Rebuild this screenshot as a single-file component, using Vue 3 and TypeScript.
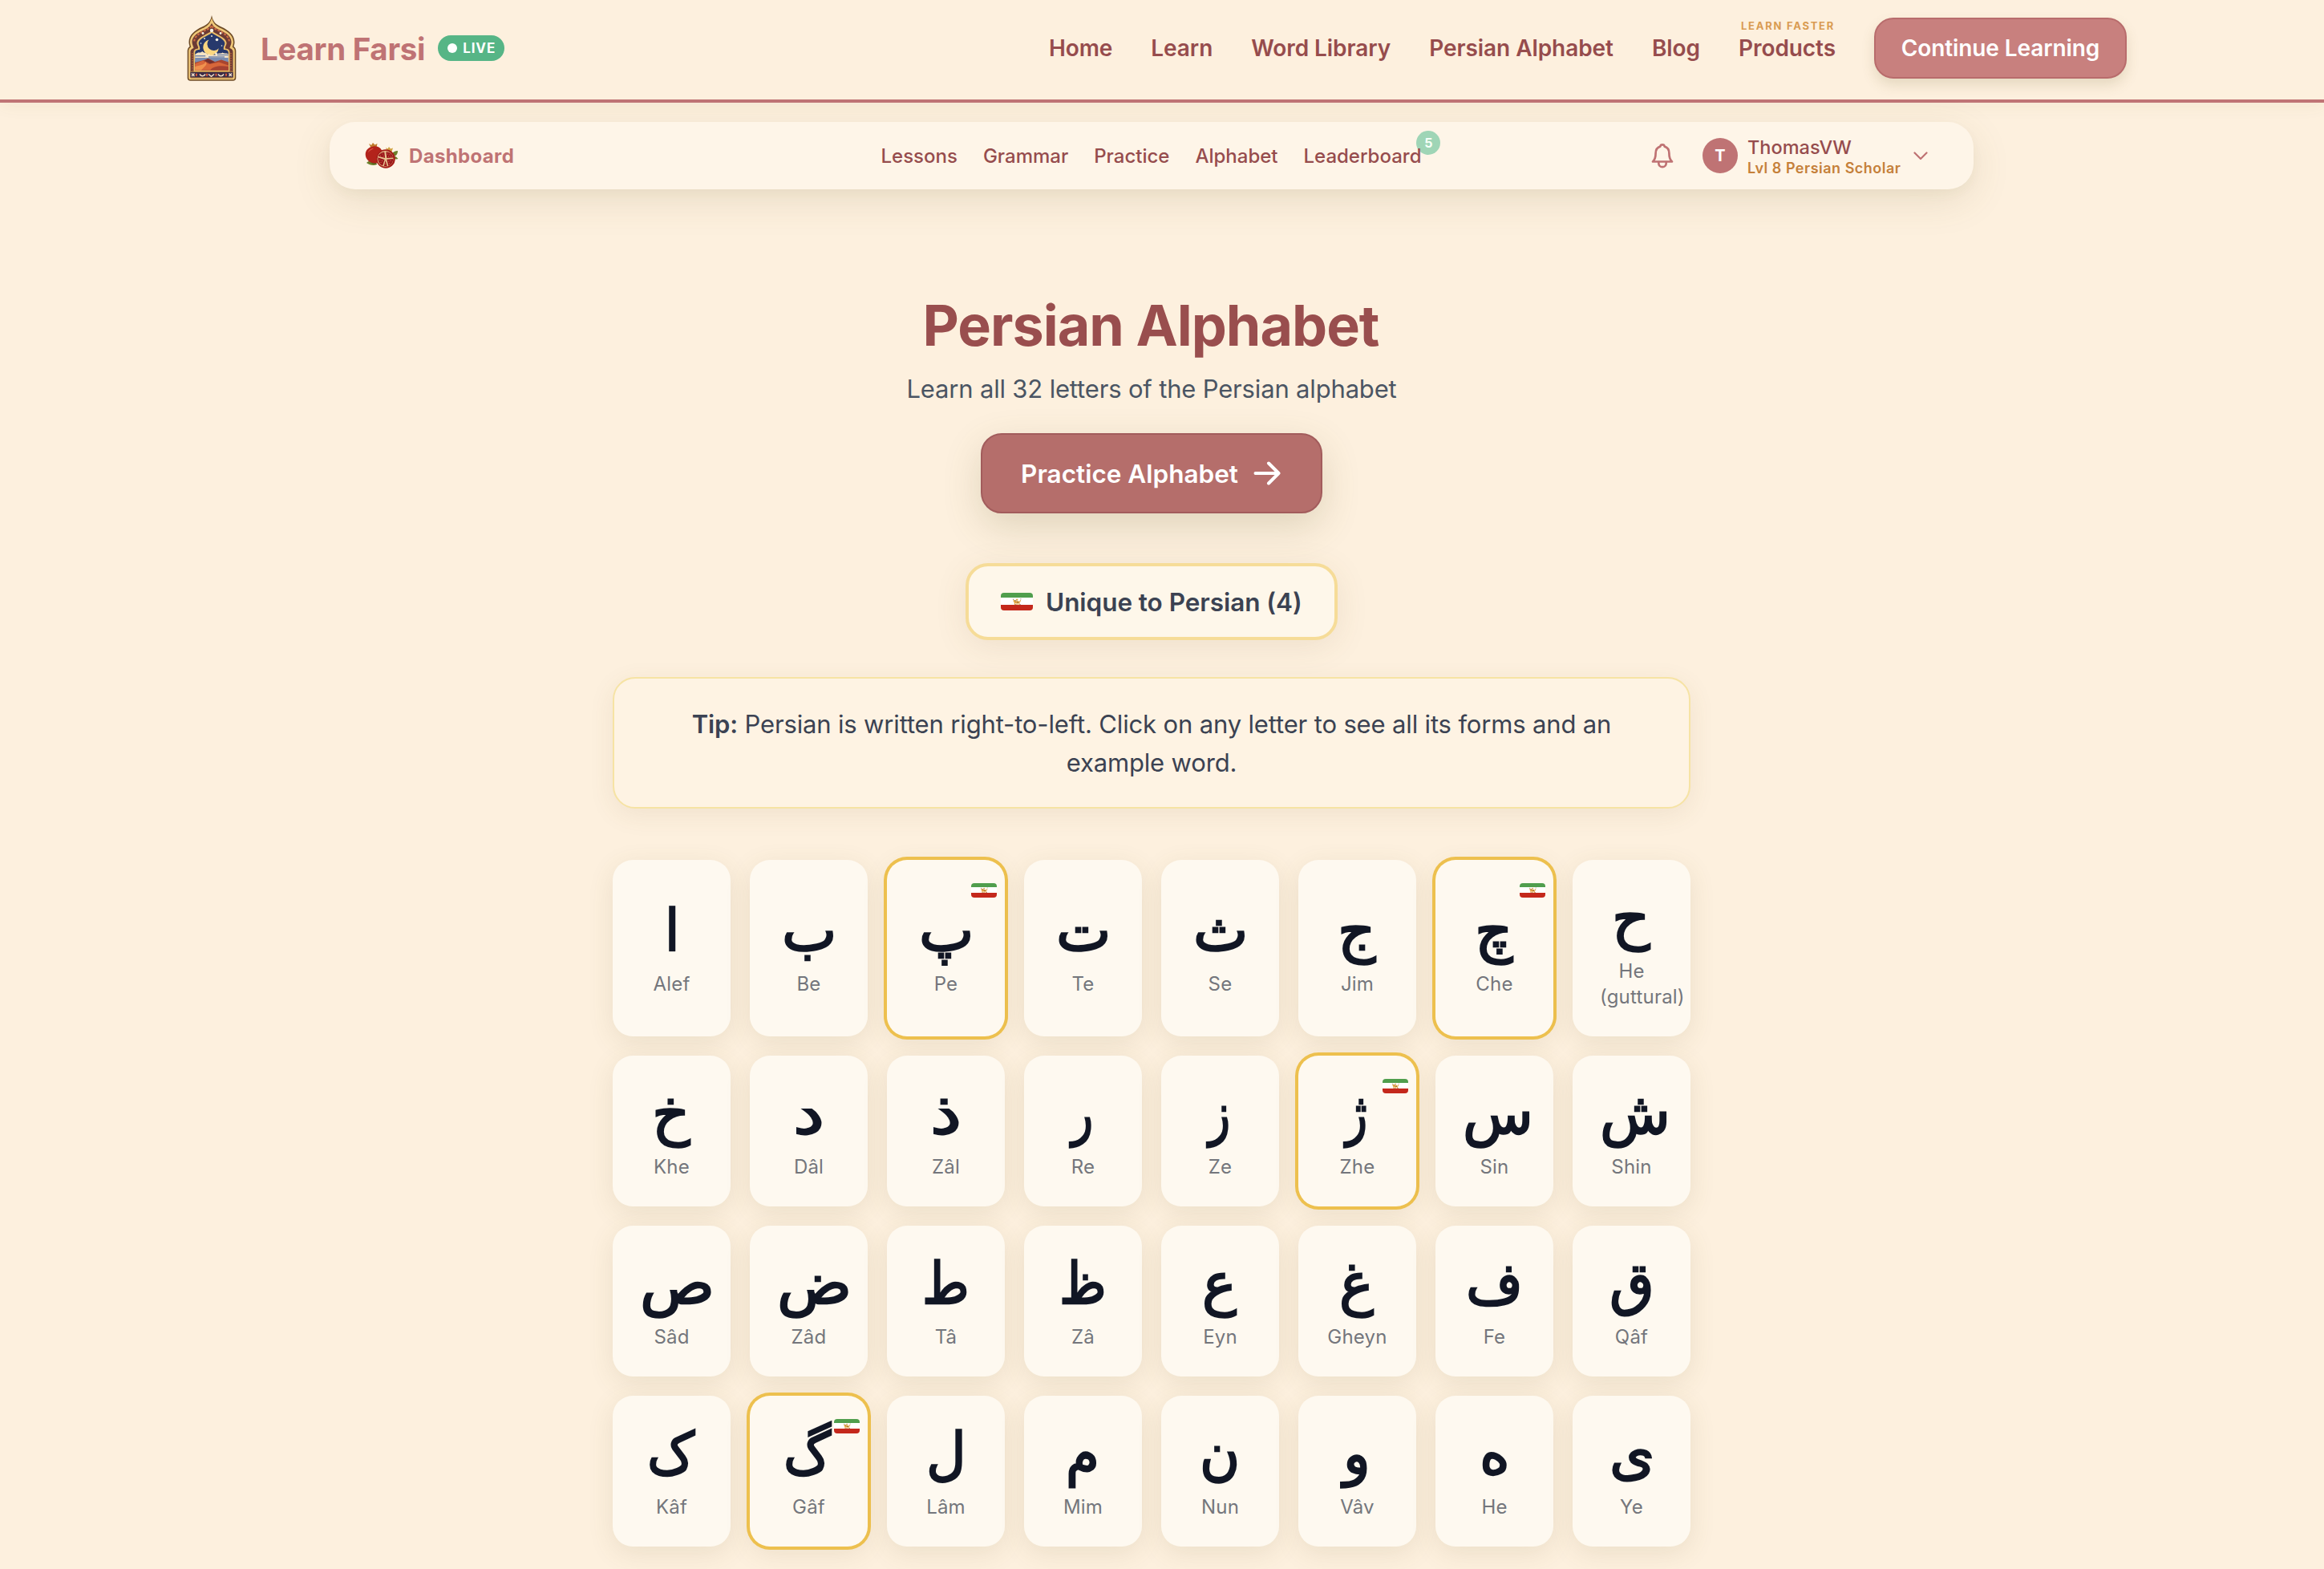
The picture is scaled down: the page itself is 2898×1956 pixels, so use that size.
<script setup lang="ts">
interface Letter {
  ch: string
  name: string
  /** horizontal scale of the glyph */
  sx: number
  /** horizontal nudge of the glyph, px */
  dx?: number
  unique?: boolean
}

const mainLinks: string[] = ['Home', 'Learn', 'Word Library', 'Persian Alphabet', 'Blog']
const subLinks: string[] = ['Lessons', 'Grammar', 'Practice', 'Alphabet', 'Leaderboard']

const letters: Letter[] = [
  { ch: 'ا', name: 'Alef', sx: 0.92 },
  { ch: 'ب', name: 'Be', sx: 1.01 },
  { ch: 'پ', name: 'Pe', sx: 1.01, unique: true },
  { ch: 'ت', name: 'Te', sx: 1.01 },
  { ch: 'ث', name: 'Se', sx: 1.01 },
  { ch: 'ج', name: 'Jim', sx: 1.02, dx: -2 },
  { ch: 'چ', name: 'Che', sx: 1.02, dx: -2, unique: true },
  { ch: 'ح', name: 'He (guttural)', sx: 1.02, dx: -2 },
  { ch: 'خ', name: 'Khe', sx: 1.02, dx: -2 },
  { ch: 'د', name: 'Dâl', sx: 1.22 },
  { ch: 'ذ', name: 'Zâl', sx: 1.22 },
  { ch: 'ر', name: 'Re', sx: 0.78, dx: -1 },
  { ch: 'ز', name: 'Ze', sx: 0.78, dx: -1 },
  { ch: 'ژ', name: 'Zhe', sx: 0.78, dx: -1, unique: true },
  { ch: 'س', name: 'Sin', sx: 1 },
  { ch: 'ش', name: 'Shin', sx: 1 },
  { ch: 'ص', name: 'Sâd', sx: 1.07, dx: 3 },
  { ch: 'ض', name: 'Zâd', sx: 1.07, dx: 3 },
  { ch: 'ط', name: 'Tâ', sx: 0.88 },
  { ch: 'ظ', name: 'Zâ', sx: 0.88 },
  { ch: 'ع', name: 'Eyn', sx: 1, dx: -1 },
  { ch: 'غ', name: 'Gheyn', sx: 1, dx: -1 },
  { ch: 'ف', name: 'Fe', sx: 0.95 },
  { ch: 'ق', name: 'Qâf', sx: 1 },
  { ch: 'ک', name: 'Kâf', sx: 0.92, dx: -2 },
  { ch: 'گ', name: 'Gâf', sx: 0.92, dx: -3, unique: true },
  { ch: 'ل', name: 'Lâm', sx: 0.95 },
  { ch: 'م', name: 'Mim', sx: 0.94 },
  { ch: 'ن', name: 'Nun', sx: 0.95 },
  { ch: 'و', name: 'Vâv', sx: 0.97, dx: -1 },
  { ch: 'ه', name: 'He', sx: 1 },
  { ch: 'ی', name: 'Ye', sx: 1 },
]
</script>

<template>
  <div class="page">
    <svg width="0" height="0" class="defs" aria-hidden="true">
      <symbol id="sun" viewBox="0 0 12 10">
        <g fill="#e2a444">
          <rect x="1.6" y="3.6" width="7" height="3.2" rx="1.2" />
          <rect x="0.6" y="2" width="2.6" height="3" rx="1" />
          <rect x="2" y="6" width="1.4" height="3" />
          <rect x="5" y="6" width="1.4" height="3" />
          <rect x="7.8" y="5.4" width="1.4" height="3.6" />
          <path d="M8.6 4.6 10.6 2l.6.6L9.6 6z" />
          <circle cx="5.6" cy="1.8" r="1.3" />
        </g>
        <path d="M0 1.4h1M10.4.8h1M3 3.2h1.6M6 5.4h1.8M3.6 8.6h.9M9.6 8.4h.9" stroke="#4c3a20" stroke-width=".9" />
      </symbol>
    </svg>

    <header class="header">
      <div class="header-inner">
        <div class="brand">
          <svg class="logo" viewBox="0 0 62 84">
            <path d="M31 1c1.500 8 5 11.500 12 14.500 9 4 16.500 10 16.500 19 0 3-1 4.500-1 5.500 2.300 1.500 2.800 3.500 2.800 6v33c0 2.500-1.300 3.800-3.800 3.800H4.500C2 82.800.7 81.500.7 79V46c0-2.500.5-4.500 2.800-6 0-1-1-2.500-1-5.500 0-9 7.500-15 16.500-19C26 12.500 29.500 9 31 1z" fill="#6d4a26" />
            <path d="M31 4c1.700 7.500 5.500 10.500 11.500 13.200C51 21 58 26.500 58 34.500c0 3-1 4.500-1.200 6.300 2.200 1 3 2.700 3 5.200v32.500c0 2-.9 2.800-2.800 2.800H5c-1.900 0-2.800-.8-2.800-2.800V46c0-2.500.8-4.200 3-5.200C5 39 4 37.500 4 34.500 4 26.500 11 21 19.500 17.200 25.500 14.500 29.300 11.500 31 4z" fill="#f0c878" />
            <path d="M31 11c2 4.500 5.500 6.500 10.500 8.800C50 23.500 55.500 28 55.500 34.500c0 3.500-2 5.500-2 7.500 2.500.8 4 2.200 4 4.500v31.800c0 .7-.3 1-1 1h-51c-.7 0-1-.3-1-1V46.500c0-2.300 1.500-3.700 4-4.500 0-2-2-4-2-7.500 0-6.500 5.500-11 14-14.700C25.500 17.500 29 15.500 31 11z" fill="#6b3a35" />
            <path d="M31 14.500c3.500 5 22 8 22 20.500" fill="none" stroke="#c96a42" stroke-width="2.200" stroke-dasharray="3 1.500" />
            <path d="M31 14.500c-3.500 5-22 8-22 20.500" fill="none" stroke="#c96a42" stroke-width="2.200" stroke-dasharray="3 1.500" />
            <path d="M31 20.500c5 4 17 7.500 18.500 14.500.5 3-2.500 5-1.500 7.500 4 .5 5.500 2 5.500 5V71h-45V47.500c0-3 1.500-4.500 5.500-5 1-2.500-2-4.500-1.500-7.500C14 28 26 24.500 31 20.500z" fill="#e9bd68" />
            <path d="M31 23c4.500 3.600 14.800 6.500 16.300 12.300.5 3-2.500 5-1.300 8.700 4 .2 5.800 1 5.800 4v21.500H10.200V48c0-3 1.800-3.800 5.800-4 1.200-3.700-1.800-5.700-1.300-8.700C16.200 29.500 26.500 26.600 31 23z" fill="#27396c" />
            <path d="M10.200 50c4-4.500 7-1 9-4 2 2.500 5 1 7 4 5-1 7 1.500 10 0 4-3 7-.5 8-2.500 3 1.800 5 0 7.600 2V58H10.200z" fill="#f4e3c4" />
            <path d="M10.200 51.800h13M27 53h20M38 50.400h13.800" stroke="#7488ad" stroke-width="1.500" />
            <path d="M10.200 54h41.600v6H10.200z" fill="#7a8db0" />
            <path d="M10.200 60 19 57.500 27 55l8 4 8-2.500 8.800 3v10H10.200z" fill="#a9452f" />
            <path d="M10.200 61.500 20 57.600l8 4.400 12-2.500 11.800 4v6H10.200z" fill="#d8673a" />
            <path d="m22 57.500 4-2.500 9 4.600-6 1.600z" fill="#73302e" />
            <path d="M10.200 65c10-2 14-4 12.500-6.200C28 62 20 66 18 69.500h-7.800z" fill="#f0924e" />
            <path d="M29 69.500c4-5 12-6 22.800-4.500v4.500z" fill="#a54231" />
            <path d="M27.500 31.500a9.800 9.800 0 1 0 12.300 10.800 7.800 7.800 0 1 1-12.300-10.800z" fill="#fbd780" />
            <g fill="#f4f0e2">
              <circle cx="31" cy="20" r="2.200" /><circle cx="37.500" cy="31.500" r="1.800" /><circle cx="36.500" cy="49" r="1.400" />
              <circle cx="22" cy="30" r=".9" /><circle cx="31" cy="27" r=".9" /><circle cx="17.500" cy="36" r=".8" />
              <circle cx="43.500" cy="39" r=".8" /><circle cx="27.500" cy="50" r=".8" /><circle cx="20" cy="23.500" r="1.400" />
              <circle cx="42" cy="23.500" r="1.400" />
            </g>
            <path d="M4.500 71.500h53v7h-53z" fill="#3a2b46" />
            <path d="M4.500 71.500h53M4.500 79h53" stroke="#b98a45" stroke-width=".9" />
            <path d="m6 73.500 3.500 3.500m0-3.500L6 77M16 74.500c2 3 5 3 7 0M27 74.500l3.500 2.800 3.500-2.800M39 74.500c2 3 5 3 7 0M52.500 73.500 56 77m0-3.500L52.500 77" fill="none" stroke="#f1dfc6" stroke-width="1.500" />
            <path d="M12 73.700v3M25 73.700v3M36.500 73.700v3M49 73.700v3" stroke="#d5573d" stroke-width="2" />
            <path d="M7 48v22M55 48v22" stroke="#c56c3d" stroke-width="1.300" stroke-dasharray="1.500 1.500" />
          </svg>
          <span class="brand-name">Learn Farsi</span>
          <span class="live"><i class="live-dot"></i>LIVE</span>
        </div>
        <nav class="nav">
          <a v-for="l in mainLinks" :key="l">{{ l }}</a>
          <a class="products"><span class="faster">LEARN FASTER</span>Products</a>
          <a class="continue">Continue Learning</a>
        </nav>
      </div>
    </header>

    <div class="content">
      <div class="dash">
        <div class="dash-home">
          <svg class="pom" viewBox="0 0 42 32">
            <path d="M2 25c3-3 7-4 11-2l2 4c-4 2-9 1-13-2zM34 14c1-3 4-4 7-4 0 3-1 6-5 7zM36 17c3-.5 4 1 5.500 3-3 1-4.500 0-6-1z" fill="#6c7f2c" />
            <path d="m5 21 7 1 3 5-6-1z" fill="#48611f" />
            <path d="m5 1 3 2 2-3 2.500 2.500L15.500 1l-1 5h-7z" fill="#c07a2c" />
            <path d="M10.500 4.500c7-1 12 4 12 10.500 0 6-4 10.500-10 10.500S.7 21 .7 14.500C.7 9 5 5.200 10.500 4.500z" fill="#b3231b" />
            <path d="M4 12c1-3.500 4-5 7-5-2.500 1.500-5 3-7 5z" fill="#e2574a" />
            <path d="m26 6 2.500 1.500L30 5l2 2.500L35 6.500l-1.500 4.500H28z" fill="#d0a13f" />
            <circle cx="26" cy="20" r="11.800" fill="#a41e1a" />
            <circle cx="25.500" cy="20" r="10" fill="#e9c391" />
            <path d="M24.300 11.400 25.200 19l-8.600-2.200c1.200-3 4-5 7.700-5.400zM26.300 11.200c4.700 0 8.300 3 8.900 7.200L27.300 19zM16.300 18.300l8.300 2.700-2.300 7.600c-3.700-1.200-6.200-5-6-10.300zM27.300 20.800l8-.8c0 4.200-2.400 7.600-6 8.900zM25.700 22l2.200 7.400-4.200-.2z" fill="#9a191c" />
            <path d="M19.500 16h.1M22 14h.1M23 16.800h.1M28.500 14h.1M31 14.800h.1M29.500 17h.1M32.500 17h.1M18.500 21.500h.1M21.500 22.500h.1M20 24.500h.1M29.500 23h.1M32 22.500h.1M30.500 25.800h.1M25.500 26.500h.1" stroke="#dc6857" stroke-width="1.200" stroke-linecap="round" />
          </svg>
          <span>Dashboard</span>
        </div>
        <nav class="dash-nav">
          <a v-for="l in subLinks" :key="l"><span v-if="l === 'Leaderboard'" class="count">5</span>{{ l }}</a>
        </nav>
        <div class="user">
          <svg class="bell" viewBox="0 0 28 32" fill="none" stroke="#bf7273" stroke-width="2.700" stroke-linejoin="round" stroke-linecap="round">
            <path d="M14 2.300c-1.500 0-2.500 1-2.700 2.300C7.500 5.800 5.600 9 5.600 13c0 5-.9 8-3.600 10.500h24C23.300 21 22.400 18 22.400 13c0-4-1.900-7.200-5.700-8.400-.2-1.300-1.200-2.300-2.700-2.300z" />
            <path d="M9.300 24v1.500a4.700 4.700 0 0 0 9.400 0V24" />
          </svg>
          <span class="avatar">T</span>
          <span class="who"><span class="uname">ThomasVW</span><span class="level">Lvl 8 Persian Scholar</span></span>
          <svg class="chev" viewBox="0 0 18 11" fill="none" stroke="#bf7273" stroke-width="2.200" stroke-linecap="round" stroke-linejoin="round"><path d="m1.500 1.500 7.500 7.500 7.500-7.500" /></svg>
        </div>
      </div>

      <main class="main">
        <h1>Persian Alphabet</h1>
        <p class="sub">Learn all 32 letters of the Persian alphabet</p>
        <a class="practice">Practice Alphabet
          <svg class="arrow" viewBox="0 0 34 30" fill="none" stroke="#fff" stroke-width="4" stroke-linecap="round" stroke-linejoin="round"><path d="M2.500 15h29M19 2.500 31.500 15 19 27.500" /></svg>
        </a>
        <div class="unique">
          <span class="flag flag-lg"><svg viewBox="0 0 12 10"><use href="#sun" /></svg></span>
          Unique to Persian (4)
        </div>
        <div class="tip"><strong>Tip:</strong> Persian is written right-to-left. Click on any letter to see all its forms and an example word.</div>
        <div class="grid">
          <div v-for="l in letters" :key="l.ch" class="card" :class="{ ring: l.unique }">
            <span v-if="l.unique" class="flag flag-sm"><svg viewBox="0 0 12 10"><use href="#sun" /></svg></span>
            <div class="stack">
              <div class="glyph"><span :style="{ transform: `translateX(${l.dx ?? 0}px) scaleX(${l.sx})` }">{{ l.ch }}</span></div>
              <div class="label">{{ l.name }}</div>
            </div>
          </div>
        </div>
      </main>
    </div>
  </div>
</template>

<style>
html, body { background: #fdf0de; overflow: hidden; }
</style>

<style scoped>
.page {
  width: 2898px;
  height: 1956px;
  overflow: hidden;
  background: #fdf0de;
  font-family: Inter, "DejaVu Sans", sans-serif;
  color: #964c4d;
}
.defs { position: absolute; }
.header {
  height: 124px;
  border-bottom: 4px solid #bf7475;
  box-shadow: 0 4px 20px rgba(110, 95, 40, 0.06);
}
.header-inner {
  width: 2432px;
  height: 120px;
  margin-left: 220px;
  display: flex;
  align-items: center;
  justify-content: space-between;
}
.brand { display: flex; align-items: center; }
.logo { width: 62px; height: 84px; margin-left: 13px; }
.brand-name {
  margin-left: 30px;
  font-size: 38.5px;
  font-weight: 700;
  letter-spacing: -0.3px;
  line-height: 48px;
  padding-top: 1px;
  color: #bf7374;
}
.live {
  margin-left: 16px;
  width: 83px;
  height: 32px;
  border-radius: 16px;
  background: #56b586;
  color: #fff;
  font-size: 17px;
  font-weight: 700;
  letter-spacing: 0.9px;
  display: flex;
  align-items: center;
}
.live-dot { width: 12px; height: 12px; margin: 0 7px 0 12px; border-radius: 50%; background: #fff; }
.nav {
  display: flex;
  align-items: center;
  gap: 48px;
  font-size: 28px;
  font-weight: 600;
  letter-spacing: -0.07px;
  line-height: 40px;
}
.products { position: relative; }
.faster {
  position: absolute;
  left: 3px;
  top: -28px;
  font-size: 13px;
  font-weight: 700;
  letter-spacing: 1.75px;
  white-space: nowrap;
  color: #d99b52;
}
.continue {
  box-sizing: border-box;
  width: 315px;
  height: 76px;
  border: 2px solid #b86c6c;
  border-radius: 24px;
  background: #c8807e;
  color: #fff;
  display: flex;
  align-items: center;
  justify-content: center;
  letter-spacing: -0.1px;
  box-shadow: 0 8px 16px rgba(110, 100, 50, 0.17);
}
.content { width: 2872px; }
.dash {
  position: relative;
  z-index: 0;
  box-sizing: border-box;
  width: 2050px;
  height: 84px;
  margin: 24px auto 0;
  padding: 0 57px 0 44px;
  border-radius: 32px;
  background: #fef5e8;
  box-shadow: 0 14px 48px rgba(105, 98, 50, 0.13), 0 6px 14px rgba(105, 98, 50, 0.04);
  display: grid;
  grid-template-columns: 1fr auto 1fr;
  align-items: center;
  font-size: 24px;
  font-weight: 500;
}
.dash-home { display: flex; align-items: center; gap: 13px; font-weight: 700; letter-spacing: 0.35px; color: #bf7374; }
.pom { width: 42px; height: 32px; }
.dash-nav { display: flex; gap: 32px; position: relative; left: 6px; }
.dash-nav a { position: relative; }
.count {
  position: absolute;
  right: -24px;
  top: -17px;
  width: 30px;
  height: 30px;
  border-radius: 50%;
  background: #9fd5b6;
  color: #f6fff8;
  font-size: 16px;
  font-weight: 700;
  line-height: 30px;
  text-align: center;
  z-index: -1;
}
.user { display: flex; align-items: center; justify-content: flex-end; }
.bell { width: 28px; height: 32px; margin-right: 36px; }
.avatar {
  width: 44px;
  height: 44px;
  border-radius: 50%;
  background: #bf7374;
  color: #fff;
  font-size: 20px;
  font-weight: 700;
  line-height: 44px;
  text-align: center;
}
.who { display: flex; flex-direction: column; margin: 5px 15.5px 0 12px; }
.uname { font-size: 23.5px; line-height: 26px; }
.level { font-size: 18px; line-height: 26px; font-weight: 600; letter-spacing: 0.5px; color: #c5803a; }
.chev { width: 18px; height: 11px; }

.main { display: flex; flex-direction: column; align-items: center; padding-top: 130px; }
h1 {
  margin: 0 2px 0 0;
  font-size: 70px;
  font-weight: 700;
  line-height: 80px;
  letter-spacing: -1px;
  color: #994e4e;
}
.sub {
  margin: 14.5px 0 0;
  font-size: 31px;
  line-height: 48px;
  letter-spacing: -0.17px;
  color: #4b5563;
}
.practice {
  box-sizing: border-box;
  width: 426px;
  height: 100px;
  margin-top: 31.5px;
  border: 2px solid #a25c5c;
  border-radius: 26px;
  background: #b56e6b;
  color: #fff;
  font-size: 31.5px;
  font-weight: 600;
  display: flex;
  align-items: center;
  justify-content: center;
  gap: 19px;
  padding-right: 2px;
  box-shadow: 0 16px 48px rgba(105, 98, 50, 0.2);
}
.arrow { width: 34px; height: 30px; }
.unique {
  box-sizing: border-box;
  width: 464px;
  height: 96px;
  margin-top: 62px;
  border: 4px solid #f6dc98;
  border-radius: 28px;
  background: #fef7ea;
  color: #3b4252;
  font-size: 31.5px;
  font-weight: 600;
  letter-spacing: -0.05px;
  padding-left: 40px;
  display: flex;
  align-items: center;
  gap: 16px;
  box-shadow: 0 8px 40px rgba(110, 85, 45, 0.1);
}
.flag {
  display: flex;
  align-items: center;
  justify-content: center;
  border-radius: 4px;
  background: linear-gradient(#509e4d 0 27%, #fff 27% 68%, #c4281c 68%);
}
.flag-lg { width: 40px; height: 22px; }
.flag-lg svg { width: 11px; height: 9px; }
.flag-sm { position: absolute; top: 28.5px; right: 10px; width: 32px; height: 18px; }
.flag-sm svg { width: 9px; height: 8px; }
.tip {
  box-sizing: border-box;
  width: 1344px;
  height: 164px;
  margin-top: 46px;
  padding: 32.5px 80px;
  border: 2px solid #f6e3a4;
  border-radius: 28px;
  background: #fef3e3;
  color: #3b4252;
  font-size: 31px;
  line-height: 48px;
  letter-spacing: -0.15px;
  text-align: center;
  box-shadow: 0 8px 32px rgba(110, 85, 45, 0.09);
}
.tip strong { font-weight: 600; }
.grid {
  width: 1344px;
  margin-top: 64px;
  display: grid;
  grid-template-columns: repeat(8, 147px);
  grid-template-rows: 220px repeat(3, 188px);
  gap: 24px;
}
.card {
  position: relative;
  display: flex;
  flex-direction: column;
  justify-content: center;
  padding: 0 34px;
  border-radius: 25px;
  background: #fef9f0;
  box-shadow: 0 8px 32px rgba(105, 98, 50, 0.12);
}
.card.ring { box-shadow: 0 0 0 4px #edc04e, 0 8px 32px rgba(105, 98, 50, 0.12); }
.glyph {
  height: 88px;
  line-height: 74px;
  font-family: Inter, sans-serif;
  font-size: 72px;
  font-weight: 700;
  text-align: center;
  color: #111624;
}
.glyph span { display: inline-block; }
.label {
  position: relative;
  top: 0.5px;
  font-size: 24px;
  line-height: 32px;
  letter-spacing: 0.2px;
  text-align: center;
  color: #74767c;
}
</style>
